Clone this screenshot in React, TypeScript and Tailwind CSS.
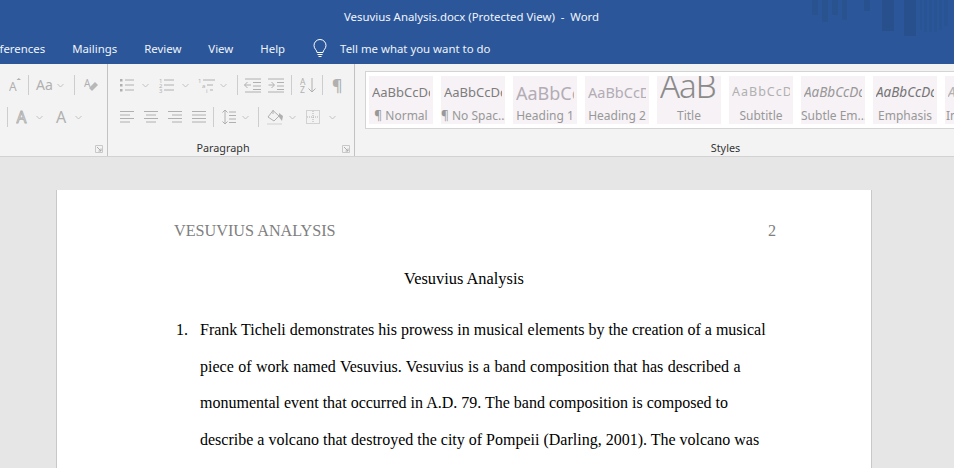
import React from "react";

const G = "#b0b0b0";

function Chev({ ml = 0 }: { ml?: number }) {
  return (
    <svg width="7" height="5" viewBox="0 0 7 5" style={{ marginLeft: ml }} className="shrink-0">
      <path d="M0.5 1 L3.5 4 L6.5 1" fill="none" stroke="#c2c2c2" strokeWidth="1" />
    </svg>
  );
}

function Sep({ ml = 0, h = 20 }: { ml?: number; h?: number }) {
  return <div className="w-px shrink-0 bg-[#cdcdcd]" style={{ marginLeft: ml, height: h }} />;
}

function Ico({ w, h = 16, ml = 0, children }: { w: number; h?: number; ml?: number; children: React.ReactNode }) {
  return (
    <svg width={w} height={h} viewBox={`0 0 ${w} ${h}`} style={{ marginLeft: ml }} className="shrink-0">
      {children}
    </svg>
  );
}

function Lines({ rows, w, ml }: { rows: [number, number][]; w: number; ml: number }) {
  return (
    <Ico w={w} ml={ml}>
      {rows.map(([a, b], i) => (
        <line key={i} x1={a} x2={b} y1={2.5 + i * 3.5} y2={2.5 + i * 3.5} stroke={G} strokeWidth="1" />
      ))}
    </Ico>
  );
}

function Launcher() {
  return (
    <svg width="8" height="8" viewBox="0 0 8 8" className="shrink-0">
      <path d="M0.5 7.5 V0.5 H7.5 V7.5 Z" fill="none" stroke="#c8c8c8" />
      <path d="M2 2 L6 6 M6 3.5 V6 H3.5" fill="none" stroke="#acacac" />
    </svg>
  );
}

const styles: { s: string; l: string; c: string }[] = [
  { s: "AaBbCcDc", l: "¶ Normal", c: "text-[13px] text-[#7d7d7d]" },
  { s: "AaBbCcDc", l: "¶ No Spac...", c: "text-[13px] text-[#7d7d7d]" },
  { s: "AaBbCc", l: "Heading 1", c: "text-[18px] text-[#b3acb5]" },
  { s: "AaBbCcD", l: "Heading 2", c: "text-[14.5px] text-[#b3acb5]" },
  { s: "AaB", l: "Title", c: "text-[33px] text-[#8a8a8a] font-light -tracking-[1px] -mt-[14px]" },
  { s: "AaBbCcD", l: "Subtitle", c: "text-[12.5px] tracking-[1px] text-[#b0b0b0]" },
  { s: "AaBbCcDc", l: "Subtle Em...", c: "text-[13.5px] italic text-[#989898]" },
  { s: "AaBbCcDc", l: "Emphasis", c: "text-[13.5px] italic text-[#757575]" },
  { s: "AaBbCcDc", l: "Intense E...", c: "text-[13.5px] italic text-[#b0b0b0]" },
];

const bars: [number, number, number, string][] = [
  [8, 6, 15, "#29538f"],
  [18, 6, 22, "#29538f"],
  [28, 6, 15, "#29538f"],
  [38, 5, 20, "#29538f"],
  [60, 6, 11, "#28528f"],
  [78, 12, 31, "#27508c"],
  [100, 12, 36, "#27508c"],
  [116, 2, 30, "#295493"],
  [120, 3, 32, "#295493"],
  [125, 3, 32, "#295493"],
  [130, 3, 32, "#295493"],
  [135, 3, 30, "#295493"],
  [140, 4, 26, "#295493"],
];

const tabs = ["Mailings", "Review", "View", "Help"];

export default function App() {
  return (
    <div className="flex h-[468px] w-[954px] flex-col overflow-hidden bg-[#e6e6e6] font-['Noto_Sans',sans-serif]">
      <header className="relative h-[64px] shrink-0 bg-[#2b579a] text-white">
        <svg width="150" height="40" viewBox="0 0 150 40" className="absolute right-0 top-0">
          {bars.map(([x, w, h, c], i) => (
            <rect key={i} x={x} y={0} width={w} height={h} fill={c} />
          ))}
        </svg>
        <div className="relative flex h-[33px] items-center justify-center text-[11.4px] text-[#f2f5fa]">
          <span className="-ml-[11px]">Vesuvius Analysis.docx (Protected View)&nbsp; -&nbsp; Word</span>
        </div>
        <nav className="flex h-[31px] items-center gap-[27px] whitespace-nowrap text-[11.4px] text-[#f0f3f8]">
          <span className="-ml-[14px]">References</span>
          {tabs.map((t) => (
            <span key={t}>{t}</span>
          ))}
          <div className="flex items-center gap-[12px]">
            <svg width="16" height="20" viewBox="0 0 16 20" className="shrink-0">
              <path
                d="M5 13.5 C5 11 2 10 2 6.5 A6 6 0 0 1 14 6.5 C14 10 11 11 11 13.5 Z M5.5 15.5 H10.5 M6.5 17.5 H9.5"
                fill="none"
                stroke="#ffffff"
                strokeWidth="1"
              />
            </svg>
            <span>Tell me what you want to do</span>
          </div>
        </nav>
      </header>

      <section className="flex h-[93px] shrink-0 border-b border-[#d2d2d2] bg-[#f3f3f3] text-[#4a4a4a]">
        {/* Font group */}
        <div className="flex w-[108px] shrink-0 flex-col border-r border-[#c2c2c2] pt-[5px]">
          <div className="flex h-[32px] items-center">
            <Ico w={12} ml={9}>
              <text x="0" y="14" fontSize="12" fill={G} fontFamily="Noto Sans">A</text>
              <path d="M7.5 3 H12 L9.75 1 Z" fill={G} />
            </Ico>
            <Sep ml={7} />
            <span className="ml-[7px] w-[17px] whitespace-nowrap text-[14px] leading-none text-[#b0b0b0]">Aa</span>
            <Chev ml={4} />
            <Sep ml={10} />
            <Ico w={14} ml={9}>
              <text x="0" y="10" fontSize="10" fill={G} fontFamily="Noto Sans">A</text>
              <path d="M5 11 L11 5 L14 8 L8 14 Z" fill="#b8b8b8" />
            </Ico>
          </div>
          <div className="flex h-[32px] items-center">
            <Sep ml={7} />
            <Ico w={14} ml={8}>
              <text x="0.5" y="14" fontSize="15.5" fill="#f3f3f3" stroke={G} strokeWidth="0.9" fontFamily="Noto Sans">A</text>
            </Ico>
            <Chev ml={6} />
            <span className="ml-[13px] w-[12px] text-[16px] leading-none text-[#b0b0b0]">A</span>
            <Chev ml={7} />
          </div>
          <div className="mr-[4px] mt-[12px] flex justify-end">
            <Launcher />
          </div>
        </div>

        {/* Paragraph group */}
        <div className="flex w-[247px] shrink-0 flex-col border-r border-[#c2c2c2] pt-[5px]">
          <div className="flex h-[32px] items-center">
            <Ico w={14} ml={12}>
              {[3, 8, 13].map((y) => (
                <g key={y}>
                  <rect x="0" y={y - 1} width="2.5" height="2.5" fill={G} />
                  <line x1="5" x2="14" y1={y} y2={y} stroke={G} />
                </g>
              ))}
            </Ico>
            <Chev ml={8} />
            <Ico w={15} ml={10}>
              {[0, 1, 2].map((i) => (
                <g key={i}>
                  <text x="0" y={5.5 + i * 5} fontSize="6" fill={G} fontFamily="Noto Sans">{i + 1}</text>
                  <line x1="5" x2="15" y1={3 + i * 5} y2={3 + i * 5} stroke={G} />
                </g>
              ))}
            </Ico>
            <Chev ml={8} />
            <Ico w={17} ml={9}>
              <text x="0" y="5.5" fontSize="6" fill={G} fontFamily="Noto Sans">1</text>
              <line x1="5" x2="17" y1="3" y2="3" stroke={G} />
              <text x="4" y="10.5" fontSize="6" fill={G} fontFamily="Noto Sans">a</text>
              <line x1="9" x2="15" y1="8" y2="8" stroke={G} />
              <text x="8" y="15.5" fontSize="6" fill={G} fontFamily="Noto Sans">i</text>
              <line x1="12" x2="15" y1="13" y2="13" stroke={G} />
            </Ico>
            <Chev ml={5} />
            <Sep ml={10} />
            <Ico w={17} ml={6}>
              <path d="M1 2 H17 M9 5.5 H17 M9 9 H17 M9 12.5 H17 M1 15 H17 M0.5 8 H7 M3.5 5 L0.5 8 L3.5 11" fill="none" stroke={G} />
            </Ico>
            <Ico w={17} ml={7}>
              <path d="M0 2 H16 M0 15 H16 M9 5.5 H16 M9 9 H16 M9 12.5 H16 M0.5 8 H6 M3.5 5 L6.5 8 L3.5 11" fill="none" stroke={G} />
            </Ico>
            <Sep ml={6} />
            <Ico w={16} ml={8}>
              <text x="0" y="7.5" fontSize="8.5" fill={G} fontFamily="Noto Sans">A</text>
              <text x="0" y="15.5" fontSize="8.5" fill={G} fontFamily="Noto Sans">Z</text>
              <path d="M12 1 V15 M8.5 11.5 L12 15 L15.5 11.5" fill="none" stroke={G} />
            </Ico>
            <Sep ml={6} />
            <span className="ml-[9px] text-[16px] font-semibold leading-none text-[#b0b0b0]">¶</span>
          </div>
          <div className="flex h-[32px] items-center">
            <Lines ml={12} w={14} rows={[[0, 14], [0, 10], [0, 14], [0, 10]]} />
            <Lines ml={10} w={14} rows={[[0, 14], [2, 12], [0, 14], [2, 12]]} />
            <Lines ml={10} w={14} rows={[[0, 14], [4, 14], [0, 14], [4, 14]]} />
            <Lines ml={10} w={14} rows={[[0, 14], [0, 14], [0, 14], [0, 14]]} />
            <Sep ml={7} />
            <Ico w={14} ml={8}>
              <path d="M3 1 V15 M0.5 3.5 L3 1 L5.5 3.5 M0.5 12.5 L3 15 L5.5 12.5 M7 3 H14 M7 6.5 H14 M7 10 H14 M7 13.5 H14" fill="none" stroke={G} />
            </Ico>
            <Chev ml={6} />
            <Sep ml={9} />
            <Ico w={16} ml={8}>
              <path d="M1 8 L6 1.5 L12 7 L7 12 Z" fill="#f3f3f3" stroke={G} />
              <path d="M6 1 V5" stroke={G} />
              <path d="M12 4 L16 7 L15 12 L12 8 Z" fill={G} />
              <rect x="0" y="14" width="15" height="2" fill="#e2e2e2" />
            </Ico>
            <Chev ml={6} />
            <Ico w={14} ml={10}>
              <rect x="0.5" y="1.5" width="13" height="13" fill="none" stroke={G} strokeDasharray="1 1" />
              <path d="M7 2 V14 M1 8 H13" stroke={G} strokeDasharray="1 1" />
            </Ico>
            <Chev ml={9} />
          </div>
          <div className="relative mt-[8px] flex h-[14px] items-center justify-center pr-[16px] text-[10.8px] leading-none text-[#333333]">
            Paragraph
            <div className="absolute right-[4px] top-[4px]">
              <Launcher />
            </div>
          </div>
        </div>

        {/* Styles group */}
        <div className="flex min-w-0 flex-1 flex-col pl-[10px] pt-[7px]">
          <div className="flex h-[58px] shrink-0 gap-[8px] overflow-hidden border-y border-l border-[#d4d4d4] bg-white py-[4px] pl-[3px]">
            {styles.map((st) => (
              <div key={st.l} className="flex h-[48px] w-[64px] shrink-0 flex-col overflow-hidden bg-[#f6f2f6] px-[3px] text-center">
                <div className="flex h-[33px] shrink-0 items-center justify-start overflow-hidden">
                  <span className={`whitespace-nowrap leading-none ${st.c}`}>{st.s}</span>
                </div>
                <div className="-mx-[3px] whitespace-nowrap text-[12px] leading-[14px] text-[#989898]">{st.l}</div>
              </div>
            ))}
          </div>
          <div className="mt-[14px] w-[721px] text-center text-[10.8px] leading-none text-[#333333]">Styles</div>
        </div>
      </section>

      <main className="min-h-0 flex-1 pl-[56px] pt-[33px]">
        <article className="h-[400px] w-[816px] border-x border-[#c8c8c8] bg-white pl-[117px] pr-[95px] pt-[30px] font-['Liberation_Serif',serif] text-[16px] text-black">
          <div className="flex justify-between text-[16.2px] leading-[22px] text-[#7f7f7f]">
            <span>VESUVIUS ANALYSIS</span>
            <span>2</span>
          </div>
          <h1 className="mt-[26px] w-[580px] text-center text-[16.4px] font-normal leading-[22px]">Vesuvius Analysis</h1>
          <div className="mt-[22px] flex">
            <span className="w-[26px] shrink-0 pl-[2px] leading-[36.6px]">1.</span>
            <p className="whitespace-nowrap leading-[36.6px]">
              Frank Ticheli demonstrates his prowess in musical elements by the creation of a musical
              <br />
              <span className="[word-spacing:0.4px]">piece of work named Vesuvius. Vesuvius is a band composition that has described a</span>
              <br />
              monumental event that occurred in A.D. 79. The band composition is composed to
              <br />
              describe a volcano that destroyed the city of Pompeii (Darling, 2001). The volcano was
            </p>
          </div>
        </article>
      </main>
    </div>
  );
}
